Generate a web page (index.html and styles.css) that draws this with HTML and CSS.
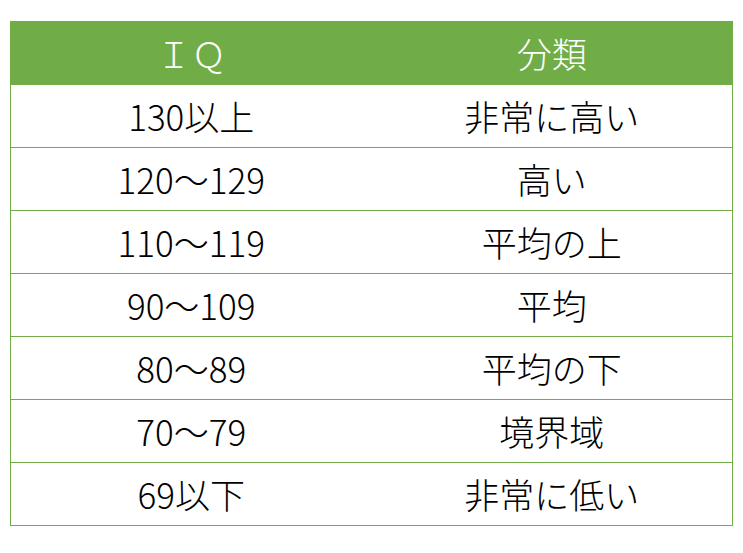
FILE: index.html
```html
<!DOCTYPE html>
<html lang="ja">
<head>
<meta charset="utf-8">
<link rel="stylesheet" href="styles.css">
</head>
<body>
<table class="iq-table">
  <thead>
    <tr><th>ＩＱ</th><th>分類</th></tr>
  </thead>
  <tbody>
    <tr><td>130以上</td><td>非常に高い</td></tr>
    <tr><td>120～129</td><td>高い</td></tr>
    <tr><td>110～119</td><td>平均の上</td></tr>
    <tr><td>90～109</td><td>平均</td></tr>
    <tr><td>80～89</td><td>平均の下</td></tr>
    <tr><td>70～79</td><td>境界域</td></tr>
    <tr><td>69以下</td><td>非常に低い</td></tr>
  </tbody>
</table>
</body>
</html>
```
FILE: styles.css
```css
html, body {
  margin: 0;
  padding: 0;
  background: #ffffff;
}
body {
  padding: 21px 10px 0 10px;
  font-family: "Noto Sans CJK JP", "Noto Sans", sans-serif;
}
.iq-table {
  width: 723px;
  border-collapse: collapse;
  table-layout: fixed;
}
.iq-table th,
.iq-table td {
  height: 63px;
  box-sizing: border-box;
  padding: 0 0 2px 0;
  text-align: center;
  vertical-align: middle;
  font-size: 35px;
  font-weight: 300;
  line-height: 1;
  color: #000000;
  border-top: 1px solid #70ad47;
  border-bottom: 1px solid #70ad47;
}
.iq-table th {
  background: #70ad47;
  color: #ffffff;
}
.iq-table th:first-child,
.iq-table td:first-child {
  border-left: 1px solid #70ad47;
}
.iq-table th:last-child,
.iq-table td:last-child {
  border-right: 1px solid #70ad47;
}
```
